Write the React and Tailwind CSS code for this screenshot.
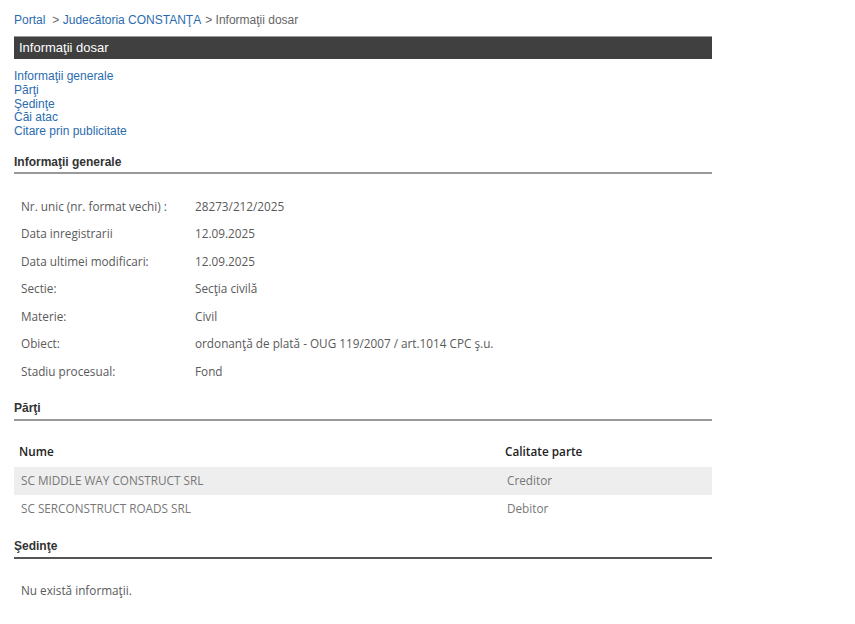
export default function App() {
  const general = [
    ["Nr. unic (nr. format vechi) :", "28273/212/2025"],
    ["Data inregistrarii", "12.09.2025"],
    ["Data ultimei modificari:", "12.09.2025"],
    ["Sectie:", "Secţia civilă"],
    ["Materie:", "Civil"],
    ["Obiect:", "ordonanţă de plată - OUG 119/2007 / art.1014 CPC ş.u."],
    ["Stadiu procesual:", "Fond"],
  ];
  const parti = [
    ["SC MIDDLE WAY CONSTRUCT SRL", "Creditor"],
    ["SC SERCONSTRUCT ROADS SRL", "Debitor"],
  ];

  return (
    <div className="min-h-screen bg-white font-['Liberation_Sans',Arial,sans-serif] text-[12px]">
      <div className="w-[698px] ml-[14px] pt-[13px]">
        <div className="text-[12px] leading-[14px] text-[#666]">
          <a href="#" className="text-[#2b6cb0]">Portal</a>
          <span className="ml-[7px]">&gt; </span>
          <a href="#" className="text-[#2b6cb0]">Judecătoria CONSTANŢA</a>
          <span className="ml-[4px]">&gt; Informaţii dosar</span>
        </div>

        <div className="mt-[9px] h-[23px] bg-[#404040] border-t border-[#999] px-[5px] text-[13px] leading-[21px] text-white">
          Informaţii dosar
        </div>

        <div className="mt-[11px] flex flex-col text-[12px] leading-[13.75px] text-[#2b6cb0]">
          <a href="#">Informaţii generale</a>
          <a href="#">Părţi</a>
          <a href="#">Şedinţe</a>
          <a href="#">Căi atac</a>
          <a href="#">Citare prin publicitate</a>
        </div>

        <h2 className="mt-[16px] pb-[3px] border-b-2 border-[#999] text-[12px] font-bold leading-[14px] text-[#333]">
          Informaţii generale
        </h2>

        <div className="mt-[19px] font-['Open_Sans',Tahoma,sans-serif] text-[11.75px] text-[#5a5a5a]">
          {general.map(([k, v]) => (
            <div key={k} className="flex h-[27.5px] items-center">
              <div className="w-[181px] pl-[7px]">{k}</div>
              <div>{v}</div>
            </div>
          ))}
        </div>

        <h2 className="mt-[16px] pb-[4px] border-b-2 border-[#999] text-[12px] font-bold leading-[14px] text-[#333]">
          Părţi
        </h2>

        <div className="mt-[16px] font-['Open_Sans',Tahoma,sans-serif] text-[11.75px]">
          <div className="flex h-[30px] items-center font-semibold text-[#222]">
            <div className="w-[491px] pl-[5px]">Nume</div>
            <div>Calitate parte</div>
          </div>
          {parti.map(([n, c], i) => (
            <div
              key={n}
              className={`flex h-[27.5px] items-center text-[#777] ${i === 0 ? "bg-[#eeeeee]" : ""}`}
            >
              <div className="w-[493px] pl-[7px]">{n}</div>
              <div>{c}</div>
            </div>
          ))}
        </div>

        <h2 className="mt-[17px] pb-[4px] border-b-2 border-[#555] text-[12px] font-bold leading-[14px] text-[#333]">
          Şedinţe
        </h2>

        <div className="mt-[23px] pl-[7px] font-['Open_Sans',Tahoma,sans-serif] text-[11.75px] text-[#5a5a5a]">
          Nu există informaţii.
        </div>
      </div>
    </div>
  );
}
